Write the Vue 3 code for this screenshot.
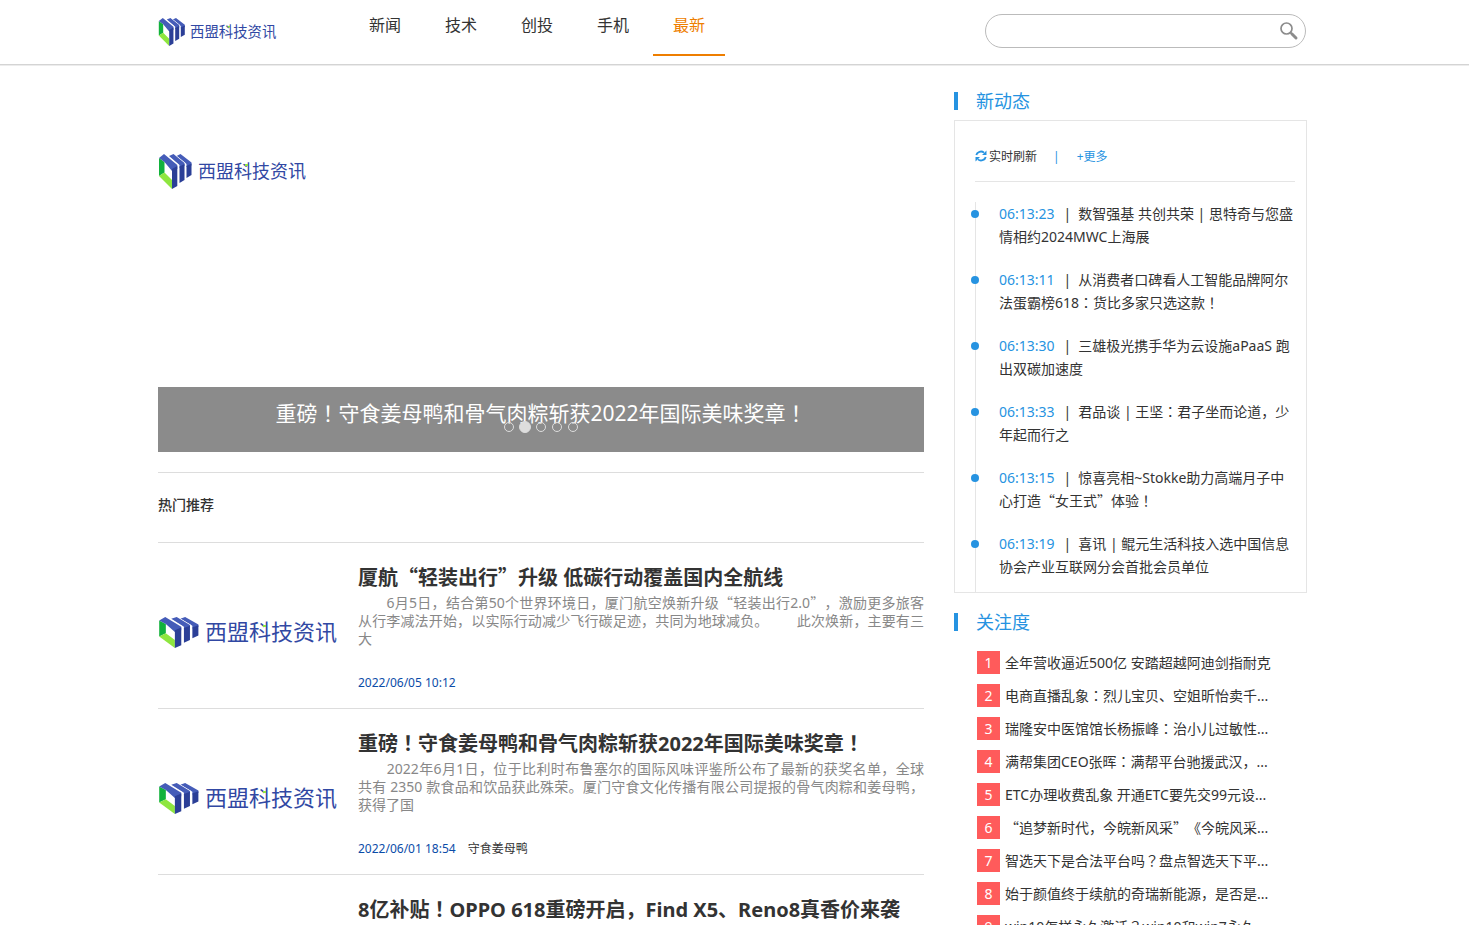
<script setup>
import { ref, h } from 'vue'

const nav = ['新闻', '技术', '创投', '手机', '最新']
const active = ref('最新')
const keyword = ref('')
const slide = ref(1)
const slideTitle = '重磅！守食姜母鸭和骨气肉粽斩获2022年国际美味奖章！'

const articles = [
  {
    title: '厦航“轻装出行”升级 低碳行动覆盖国内全航线',
    text: '　　6月5日，结合第50个世界环境日，厦门航空焕新升级“轻装出行2.0”，激励更多旅客从行李减法开始，以实际行动减少飞行碳足迹，共同为地球减负。　　此次焕新，主要有三大',
    date: '2022/06/05 10:12',
    tag: '',
  },
  {
    title: '重磅！守食姜母鸭和骨气肉粽斩获2022年国际美味奖章！',
    text: '　　2022年6月1日，位于比利时布鲁塞尔的国际风味评鉴所公布了最新的获奖名单，全球共有 2350 款食品和饮品获此殊荣。厦门守食文化传播有限公司提报的骨气肉粽和姜母鸭，获得了国',
    date: '2022/06/01 18:54',
    tag: '守食姜母鸭',
  },
  { title: '8亿补贴！OPPO 618重磅开启，Find X5、Reno8真香价来袭' },
]

const updates = [
  ['06:13:23', '数智强基 共创共荣 | 思特奇与您盛情相约2024MWC上海展'],
  ['06:13:11', '从消费者口碑看人工智能品牌阿尔法蛋霸榜618：货比多家只选这款！'],
  ['06:13:30', '三雄极光携手华为云设施aPaaS 跑出双碳加速度'],
  ['06:13:33', '君品谈 | 王坚：君子坐而论道，少年起而行之'],
  ['06:13:15', '惊喜亮相~Stokke助力高端月子中心打造“女王式”体验！'],
  ['06:13:19', '喜讯 | 鲲元生活科技入选中国信息协会产业互联网分会首批会员单位'],
]

const ranking = [
  '全年营收逼近500亿 安踏超越阿迪剑指耐克',
  '电商直播乱象：烈儿宝贝、空姐昕怡卖千...',
  '瑞隆安中医馆馆长杨振峰：治小儿过敏性...',
  '满帮集团CEO张晖：满帮平台驰援武汉，...',
  'ETC办理收费乱象 开通ETC要先交99元设...',
  '“追梦新时代，今皖新风采”《今皖风采...',
  '智选天下是合法平台吗？盘点智选天下平...',
  '始于颜值终于续航的奇瑞新能源，是否是...',
  'win10怎样永久激活？win10和win7永久...',
]

// Full-width quotes and centred punctuation use their own CJK faces.
const Txt = (props) =>
  h('span', { class: 'txt' }, props.t.split(/([“”！：？])/).filter(Boolean).map((s) =>
    /^[“”]$/.test(s)
      ? h('span', { class: 'quote' }, s)
      : /^[！：？]$/.test(s)
        ? h('span', { class: 'mid', lang: 'ja' }, s)
        : s
  ))
Txt.props = ['t']
</script>

<template>
  <div class="page" lang="zh-CN">
    <svg class="defs" aria-hidden="true">
      <symbol id="mark" viewBox="0 0 34 36" preserveAspectRatio="none">
        <path fill="#455cb8" d="M18.500 3l4-2L33.500 9.500v3L28.500 14v-3z" />
        <path fill="#2b3f97" d="M28.500 13l5-2.500V22l-5 3z" />
        <path fill="#fff" d="M9.500 4l7-3L27.500 10v18L20 31V14z" />
        <path fill="#455cb8" d="M11 3l4.500-2L26.500 10v3l-5 2v-3z" />
        <path fill="#2b3f97" d="M21.500 13.500l5-2.500v16l-5 3z" />
        <path fill="#fff" d="M1 5l6-4.500L20.500 11.500V34L14 36z" />
        <path fill="#12b23c" d="M1 5l5.500 4v10.500L1 23z" />
        <path fill="#8ee63f" d="M1 23l5.500-3.500L14 27v9z" />
        <path fill="#455cb8" d="M1 5l5-4 13.300 11v4L14 18 6.500 9z" />
        <path fill="#2b3f97" d="M14 16l5.300-3v20L14 36z" />
      </symbol>
    </svg>

    <header class="top">
      <div class="wrap bar">
        <a href="#" class="brand" aria-label="西盟科技资讯">
          <svg class="logo-small" viewBox="0 0 150 36">
            <use href="#mark" width="34" height="36" />
            <text class="logo-text" x="40" y="25" font-size="18">西盟科技资讯</text>
            <rect x="87" y="11" width="3" height="2" fill="#8ee63f" />
          </svg>
        </a>
        <nav class="nav">
          <a v-for="n in nav" :key="n" href="#" :class="{ on: n === active }" @click.prevent="active = n">{{ n }}</a>
        </nav>
        <form class="search" @submit.prevent>
          <input v-model="keyword" type="text" aria-label="搜索" />
          <button type="submit" aria-label="搜索">
            <svg width="18" height="18" viewBox="0 0 18 18" fill="none" stroke="#8c8c8c">
              <circle cx="6.500" cy="6.500" r="5.500" stroke-width="1.700" />
              <path d="M10.500 10.500l1.500 1.500" stroke-width="2" />
              <path d="M12 12l4 4" stroke-width="3" stroke-linecap="round" />
            </svg>
          </button>
        </form>
      </div>
    </header>

    <div class="wrap cols">
      <main class="main">
        <section class="hero">
          <svg class="logo-hero" viewBox="0 0 150 36">
            <use href="#mark" width="34" height="36" />
            <text class="logo-text" x="40" y="25" font-size="18">西盟科技资讯</text>
            <rect x="87" y="11" width="3" height="2" fill="#8ee63f" />
          </svg>
          <a href="#" class="caption"><Txt :t="slideTitle" /></a>
          <div class="dots">
            <button v-for="i in 5" :key="i" type="button" :aria-label="'第' + i + '张'" :class="{ on: slide === i - 1 }" @click="slide = i - 1"></button>
          </div>
        </section>

        <h2 class="hot">热门推荐</h2>

        <article v-for="a in articles" :key="a.title" class="item">
          <a v-if="a.text" href="#" class="thumb" aria-label="西盟科技资讯">
            <svg viewBox="0 0 180 32">
              <use href="#mark" width="41" height="32" />
              <text class="logo-text" x="47" y="24" font-size="22">西盟科技资讯</text>
              <rect x="105" y="9" width="3" height="2" fill="#8ee63f" />
            </svg>
          </a>
          <div class="body">
            <h3><a href="#"><Txt :t="a.title" /></a></h3>
            <template v-if="a.text">
              <p><Txt :t="a.text" /></p>
              <div class="meta"><time>{{ a.date }}</time><a v-if="a.tag" href="#">{{ a.tag }}</a></div>
            </template>
          </div>
        </article>
      </main>

      <aside class="side">
        <h2 class="side-title">新动态</h2>
        <section class="news">
          <div class="tools">
            <button type="button" class="refresh">
              <svg width="12" height="12" viewBox="0 0 12 12">
                <path d="M1.300 5A4.700 4.300 0 0 1 9 2.600M10.700 7A4.700 4.300 0 0 1 3 9.400" fill="none" stroke="#2693e1" stroke-width="1.800" />
                <path d="M11.500 .5v4.500H7zM.5 11.500V7H5z" fill="#2693e1" />
              </svg>
              实时刷新
            </button>
            <span class="sep">|</span>
            <a href="#">+更多</a>
          </div>
          <ul class="timeline">
            <li v-for="u in updates" :key="u[0]">
              <time>{{ u[0] }}</time><span class="pipe">|</span><a href="#"><Txt :t="u[1]" /></a>
            </li>
          </ul>
        </section>

        <h2 class="side-title">关注度</h2>
        <ol class="rank">
          <li v-for="(r, i) in ranking" :key="r"><span class="num">{{ i + 1 }}</span><a href="#"><Txt :t="r" /></a></li>
        </ol>
      </aside>
    </div>
  </div>
</template>

<style>
body {
  margin: 0;
  background: #fff;
}
</style>

<style scoped>
.page {
  height: 100vh;
  overflow: hidden;
  font-family: "Noto Sans", "Noto Sans CJK SC", sans-serif;
  font-size: 14px;
  color: #333;
  text-spacing-trim: space-all;
}
.page * { box-sizing: border-box; }
a { color: inherit; text-decoration: none; }
h2, h3, p, ul, ol { margin: 0; padding: 0; }
ul, ol { list-style: none; }
button { padding: 0; border: 0; background: none; font: inherit; color: inherit; cursor: pointer; }
svg { display: block; overflow: visible; }
.txt :deep(span) { line-height: 0; }
.txt :deep(.quote) { font-family: "Noto Sans CJK SC", sans-serif; }
.txt :deep(.mid) { font-family: "Noto Sans CJK JP", sans-serif; }
.defs { position: absolute; width: 0; height: 0; }
.logo-text { font-family: "Noto Sans CJK SC", sans-serif; fill: #3148a3; }

.wrap { max-width: 1153px; margin: 0 auto; padding-right: 4px; }
.top { height: 66px; border-bottom: 1px solid #ececec; box-shadow: inset 0 -1px 0 #d4d4d4; }
.bar { display: flex; align-items: flex-start; }
.brand { width: 120px; margin-top: 17px; }
.logo-small { width: 120px; height: 29px; }
.nav { display: flex; gap: 4px; margin-left: 71px; }
.nav a { padding: 0 20px; height: 56px; font-size: 16px; line-height: 50px; border-bottom: 2px solid transparent; }
.nav a.on { color: #ee7e00; border-color: #ee7e00; }
.search {
  display: flex; align-items: center; width: 321px; height: 34px; margin: 14px 1px 0 auto;
  border: 1px solid #bbb; border-radius: 17px; padding: 0 7px 0 16px;
}
.search input { flex: 1; min-width: 0; border: 0; outline: 0; background: none; font: inherit; }

.cols { display: flex; gap: 30px; }
.main { flex: 1; min-width: 0; }
.hero { position: relative; display: flex; flex-direction: column; justify-content: space-between; height: 386px; padding-top: 87px; }
.logo-hero { width: 150px; height: 36px; }
.caption { height: 65px; background: #8b8b8b; color: #fff; font-size: 21px; line-height: 52px; text-align: center; }
.dots { position: absolute; left: 0; right: 0; bottom: 19px; display: flex; justify-content: center; align-items: center; height: 12px; }
.dots button { width: 10px; height: 10px; margin: 0 3px; border: 1px solid #ddd; border-radius: 50%; }
.dots button.on { width: 12px; height: 12px; margin: 0 2px; background: #ddd; }
.hot { margin-top: 20px; height: 70px; border-top: 1px solid #ddd; font-size: 14px; font-weight: 500; line-height: 64px; }
.item { display: flex; align-items: center; gap: 20px; min-height: 166px; border-top: 1px solid #ddd; }
.item:last-child { align-items: flex-start; padding-left: 200px; }
.thumb { width: 180px; flex: none; padding-top: 12px; }
.body { flex: 1; min-width: 0; align-self: flex-start; padding-top: 19px; }
h3 { font-size: 20px; font-weight: 700; line-height: 32px; }
p { color: #888; line-height: 18px; text-align: justify; min-height: 54px; }
.meta { display: flex; gap: 12px; margin-top: 26px; font-size: 12px; line-height: 18px; }
.meta time { color: #0b4ca8; }

.side { width: 353px; flex: none; padding-top: 26px; }
.side-title { font-size: 18px; font-weight: 400; line-height: 18px; color: #2693e1; border-left: 4px solid #2693e1; padding-left: 18px; }
.news { margin: 10px 0 20px; padding: 20px 11px 0 20px; border: 1px solid #e5e5e5; }
.tools { display: flex; align-items: center; height: 41px; padding-bottom: 10px; border-bottom: 1px solid #e5e5e5; font-size: 12px; color: #2693e1; }
.refresh { display: flex; align-items: center; gap: 2px; color: #333; }
.sep { margin: 0 17px 0 16px; }
.timeline { margin-top: 20px; border-left: 1px solid #e5e5e5; }
.timeline li { position: relative; padding-left: 23px; padding-bottom: 20px; line-height: 23px; }
.timeline li:last-child { padding-bottom: 14px; }
.timeline li::before { content: ""; position: absolute; left: -5px; top: 8px; width: 8px; height: 8px; border-radius: 50%; background: #2693e1; }
.timeline time { color: #2693e1; }
.pipe { margin: 0 7px 0 9px; }
.rank { margin-top: 20px; padding-left: 23px; }
.rank li { display: flex; gap: 5px; height: 23px; margin-bottom: 10px; line-height: 23px; white-space: nowrap; }
.num { width: 23px; background: #ff5b5b; color: #fff; text-align: center; }
</style>
